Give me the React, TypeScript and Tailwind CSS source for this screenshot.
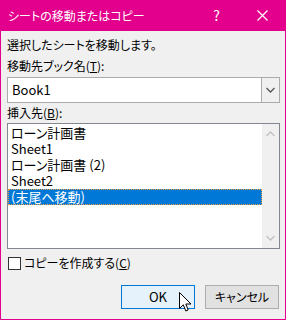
import React from "react";

const items = ["ローン計画書", "Sheet1", "ローン計画書 (2)", "Sheet2"];

const font =
  "font-['Noto_Sans_CJK_JP','Noto_Sans',sans-serif] [font-feature-settings:'palt'] text-[12px] text-black";

function Chevron({ down, color }: { down: boolean; color: string }) {
  return (
    <svg width="9" height="6" viewBox="0 0 9 6">
      <path
        d={down ? "M0.5 1 L4.5 5 L8.5 1" : "M0.5 5 L4.5 1 L8.5 5"}
        fill="none"
        stroke={color}
        strokeWidth="1.3"
      />
    </svg>
  );
}

export default function App() {
  return (
    <div className={`relative h-[320px] w-[286px] border-x border-b border-[#e3008c] bg-[#f0f0f0] ${font}`}>
      {/* Title bar */}
      <div className="flex h-[31px] items-center bg-[#e3008c] pl-[7px] text-white">
        <span className="text-[12px]">シートの移動またはコピー</span>
        <span className="ml-auto mr-[37px] text-[14px]">?</span>
        <svg className="mr-[17px]" width="11" height="11" viewBox="0 0 11 11">
          <path d="M0.5 0.5 L10.5 10.5 M10.5 0.5 L0.5 10.5" stroke="white" strokeWidth="1.2" />
        </svg>
      </div>

      <div className="flex flex-col pl-[6px]">
        <div className="mt-[6px] h-[16px] leading-[16px]">選択したシートを移動します。</div>
        <div className="mt-[5px] h-[16px] leading-[16px]">
          移動先ブック名(<span className="underline">T</span>):
        </div>

        {/* Combo box */}
        <div className="mt-[3px] flex h-[26px] w-[273px] border border-[#acacac] bg-white">
          <div className="flex flex-1 items-center pl-[4px] text-[13px]">Book1</div>
          <div className="flex w-[18px] items-center justify-center border-l border-[#acacac] bg-[#f0f0f0]">
            <Chevron down color="#555" />
          </div>
        </div>

        <div className="mt-[2px] h-[16px] leading-[16px]">
          挿入先(<span className="underline">B</span>):
        </div>

        {/* List box */}
        <div className="mt-[2px] flex h-[126px] w-[273px] border border-[#828790] bg-white">
          <div className="flex flex-1 flex-col pt-[1px]">
            {items.map((t) => (
              <div key={t} className="h-[16px] pl-[3px] leading-[16px] text-[13px]">
                {t}
              </div>
            ))}
            <div className="h-[16px] border border-dotted border-[#f0a040] bg-[#0078d7] pl-[2px] leading-[14px] text-[13px] text-white">
              (末尾へ移動)
            </div>
          </div>
          <div className="flex w-[17px] flex-col items-center justify-between bg-[#f0f0f0] py-[7px]">
            <Chevron down={false} color="#c0c0c0" />
            <Chevron down color="#c0c0c0" />
          </div>
        </div>

        {/* Checkbox */}
        <div className="mt-[6px] flex h-[16px] items-center">
          <div className="ml-[1px] h-[13px] w-[13px] border border-[#333] bg-white" />
          <span className="ml-[3px] leading-[16px]">
            コピーを作成する(<span className="underline">C</span>)
          </span>
        </div>
      </div>

      {/* Buttons */}
      <div className="mt-[14px] flex justify-end gap-[10px] pr-[6px]">
        <button className="h-[24px] w-[74px] border border-[#0078d7] bg-[#e5f1fb] text-[13px]">OK</button>
        <button className="h-[24px] w-[74px] border border-[#adadad] bg-[#e1e1e1] text-[12px]">キャンセル</button>
      </div>

      {/* Mouse cursor */}
      <svg className="absolute left-[178px] top-[292px]" width="13" height="21" viewBox="0 0 13 21">
        <path
          d="M0.5 0.5 L0.5 16.5 L4.3 12.8 L6.8 19 L9.2 18 L6.8 12 L12 12 Z"
          fill="white"
          stroke="black"
          strokeWidth="1"
          strokeLinejoin="miter"
        />
      </svg>
    </div>
  );
}
